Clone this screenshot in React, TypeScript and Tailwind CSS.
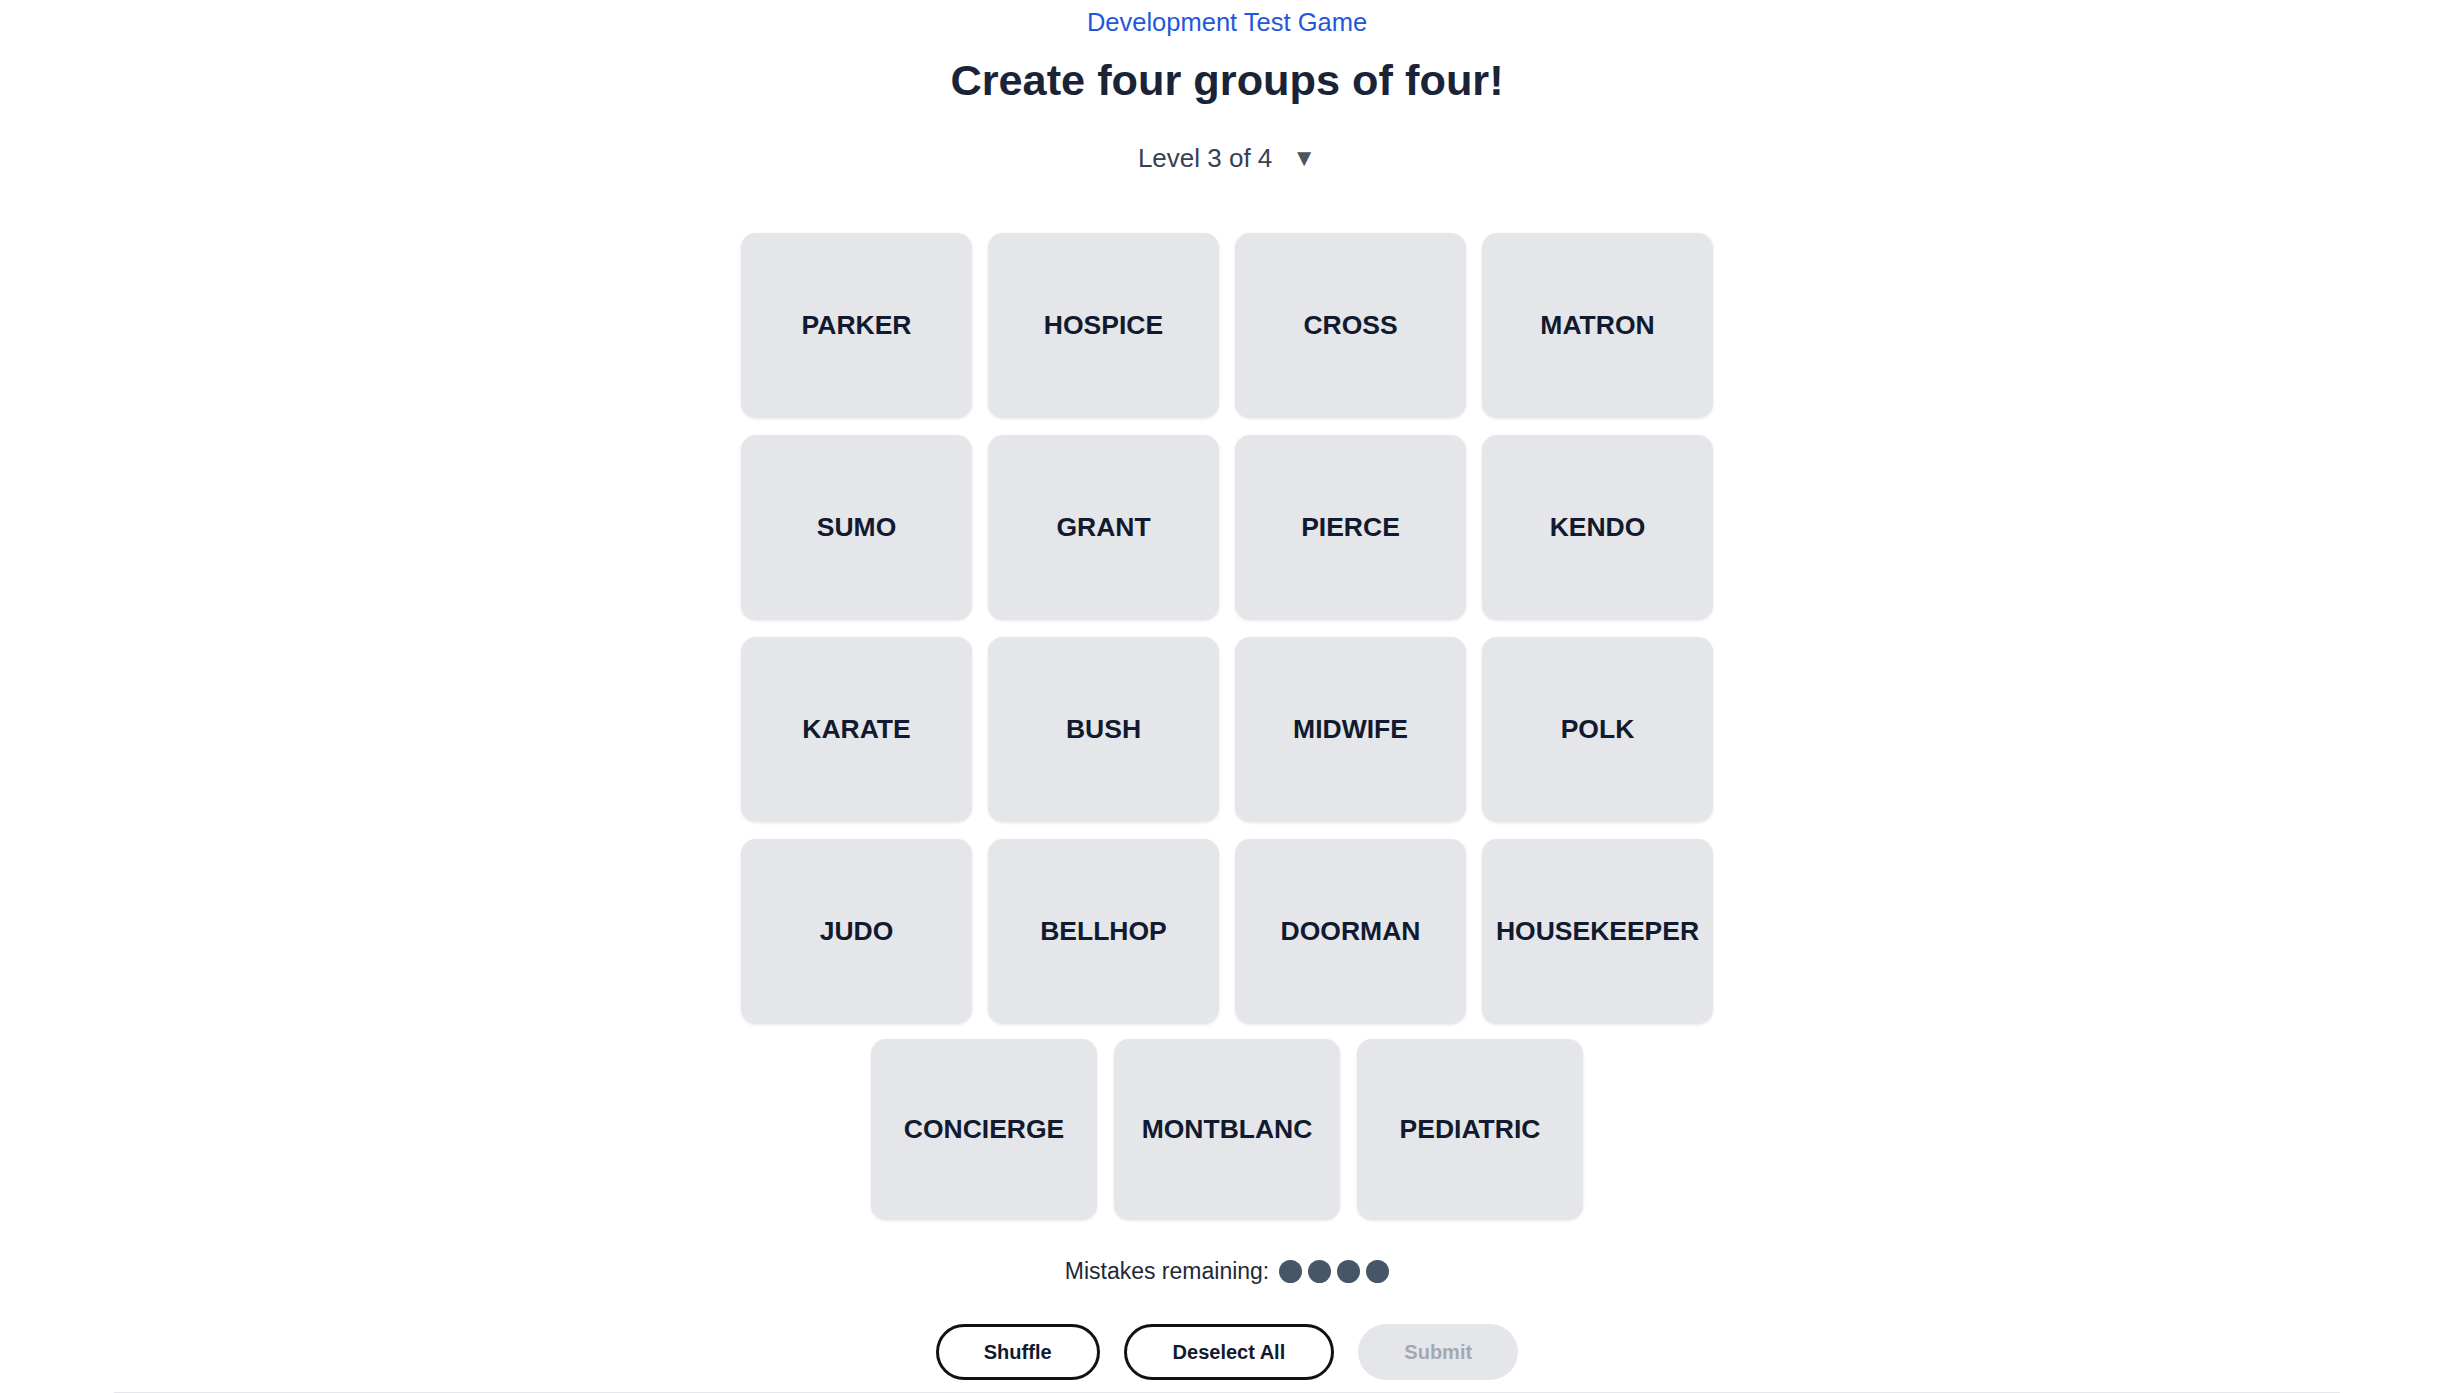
import React, { useState } from "react";

const rows: string[][] = [
  ["PARKER", "HOSPICE", "CROSS", "MATRON"],
  ["SUMO", "GRANT", "PIERCE", "KENDO"],
  ["KARATE", "BUSH", "MIDWIFE", "POLK"],
  ["JUDO", "BELLHOP", "DOORMAN", "HOUSEKEEPER"],
];

const leftovers = ["CONCIERGE", "MONTBLANC", "PEDIATRIC"];

function Tile({ word, small }: { word: string; small?: boolean }) {
  return (
    <button
      type="button"
      className={`${small ? "w-[226px] h-[181px]" : "w-[231px] h-[185px]"} rounded-[15px] bg-[#e5e6ea] shadow-[0_1px_3px_rgba(15,23,42,0.10)] flex items-center justify-center text-[26.5px] font-bold text-[#111a2e] leading-none cursor-pointer`}
    >
      {word}
    </button>
  );
}

export default function App() {
  const [open, setOpen] = useState(false);
  const mistakes = 4;

  return (
    <div className="min-h-screen w-full bg-white flex flex-col items-center font-['Liberation_Sans',Arial,sans-serif]">
      {/* Header */}
      <div className="pt-[4px] text-[25.5px] leading-[36px] text-[#1f58dc]">Development Test Game</div>
      <h1 className="mt-[16px] text-[43.3px] leading-[48px] font-bold text-[#1b2436]">
        Create four groups of four!
      </h1>
      <button
        type="button"
        onClick={() => setOpen(!open)}
        className="mt-[36px] flex items-center gap-[20px] text-[26px] leading-[36px] text-[#374151] cursor-pointer"
      >
        <span>Level 3 of 4</span>
        <span className="text-[24px] text-[#4b5563]">▼</span>
      </button>

      {/* Board */}
      <div className="mt-[57px] flex flex-col gap-[17px]">
        {rows.map((row, i) => (
          <div key={i} className="flex gap-[16px]">
            {row.map((w) => (
              <Tile key={w} word={w} />
            ))}
          </div>
        ))}
      </div>
      <div className="mt-[15px] flex gap-[17px]">
        {leftovers.map((w) => (
          <Tile key={w} word={w} small />
        ))}
      </div>

      {/* Mistakes */}
      <div className="mt-[33px] flex items-center gap-[10px] text-[23px] leading-[36px] text-[#1f2937]">
        <span>Mistakes remaining:</span>
        <div className="flex gap-[6px]">
          {Array.from({ length: mistakes }).map((_, i) => (
            <span key={i} className="w-[23px] h-[23px] rounded-full bg-[#475569]" />
          ))}
        </div>
      </div>

      {/* Actions */}
      <div className="mt-[35px] flex items-center gap-[24px]">
        <button
          type="button"
          className="h-[56px] px-[45px] rounded-full border-[3px] border-[#111111] bg-white text-[20px] font-bold text-[#111a2e] cursor-pointer"
        >
          Shuffle
        </button>
        <button
          type="button"
          className="h-[56px] px-[46px] rounded-full border-[3px] border-[#111111] bg-white text-[20px] font-bold text-[#111a2e] cursor-pointer"
        >
          Deselect All
        </button>
        <button
          type="button"
          disabled
          className="h-[56px] w-[160px] rounded-full bg-[#e5e6ea] text-[20px] font-bold text-[#a3a8b3]"
        >
          Submit
        </button>
      </div>

      <div className="mt-[12px] w-[2226px] border-t border-[#e5e7eb]" />
    </div>
  );
}
